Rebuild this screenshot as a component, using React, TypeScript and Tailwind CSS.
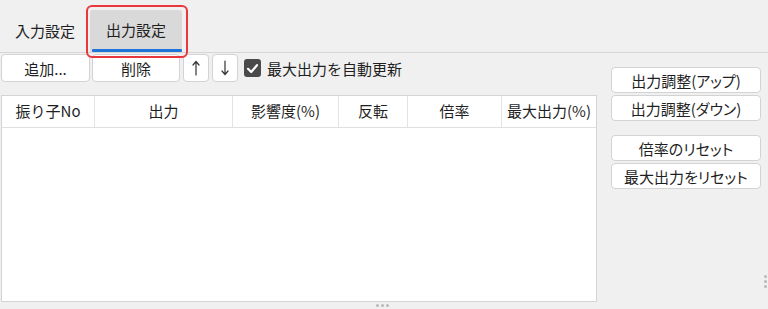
import React from "react";

const font = { fontFamily: '"Noto Sans CJK JP", "Noto Sans", sans-serif' };

function Btn({ children, className = "" }: { children: React.ReactNode; className?: string }) {
  return (
    <div
      className={`flex items-center justify-center bg-white border border-[#d3d3d3] rounded-[4px] text-[15px] text-[#1f1f1f] leading-none ${className}`}
    >
      {children}
    </div>
  );
}

const cols = [
  { label: "振り子No", w: "w-[93px]" },
  { label: "出力", w: "w-[138px]" },
  { label: "影響度(%)", w: "w-[106px]" },
  { label: "反転", w: "w-[69px]" },
  { label: "倍率", w: "w-[94px]" },
  { label: "最大出力(%)", w: "flex-1" },
];

function Dot() {
  return <div className="w-[3px] h-[3px] rounded-full bg-[#b8b8b8]" />;
}

function Arrow({ down = false }: { down?: boolean }) {
  return (
    <svg width="10" height="16" viewBox="0 0 10 16" className={down ? "rotate-180" : ""}>
      <path d="M5 1.5 V15 M2 5 L5 1.5 L8 5" fill="none" stroke="#333333" strokeWidth="1.2" strokeLinecap="round" strokeLinejoin="round" />
    </svg>
  );
}

export default function App() {
  return (
    <div className="w-[768px] h-[309px] bg-[#f0f0f0] overflow-hidden flex flex-col relative" style={font}>
      {/* Tab bar */}
      <div className="h-[53px] flex items-end border-b border-[#d6d6d6] shrink-0">
        <div className="h-[42px] w-[86px] flex items-center justify-center text-[15px] text-[#1f1f1f] pl-[4px]">
          入力設定
        </div>
        <div className="h-[42px] w-[92px] ml-[4px] flex flex-col bg-[#d9d9d9] rounded-t-[3px]">
          <div className="flex-1 flex items-center justify-center text-[15px] text-[#1f1f1f] pt-[1px]">出力設定</div>
          <div className="h-[3px] ml-[2px] bg-[#1e74d8] rounded-[1px]" />
        </div>
      </div>
      {/* red highlight annotation */}
      <div className="absolute left-[86px] top-[5px] w-[102px] h-[53px] border-2 border-[#e8383d] rounded-[6px] pointer-events-none" />

      {/* Content */}
      <div className="flex flex-1 min-h-0">
        {/* Left panel */}
        <div className="w-[597px] flex flex-col pl-[1px]">
          <div className="flex items-center h-[28px] mt-[1px] gap-[2px]">
            <Btn className="w-[89px] h-[28px]">追加...</Btn>
            <Btn className="w-[88px] h-[28px]">削除</Btn>
            <Btn className="w-[26px] h-[28px] ml-[1px]">
              <Arrow />
            </Btn>
            <Btn className="w-[26px] h-[28px] ml-[1px]">
              <Arrow down />
            </Btn>
            <div className="ml-[4px] w-[17px] h-[18px] rounded-[3px] bg-[#4a4a4a] flex items-center justify-center">
              <svg width="13" height="13" viewBox="0 0 13 13">
                <path d="M2 6.8 L5.2 10 L11 3.2" fill="none" stroke="#ffffff" strokeWidth="2.2" strokeLinecap="round" strokeLinejoin="round" />
              </svg>
            </div>
            <span className="ml-[4px] text-[15px] text-[#1f1f1f] leading-none">最大出力を自動更新</span>
          </div>
          <div className="mt-[13px] flex-1 bg-white border border-[#d4d4d4] flex flex-col">
            <div className="h-[32px] flex border-b border-[#e0e0e0]">
              {cols.map((c, i) => (
                <div
                  key={c.label}
                  className={`${c.w} flex items-center justify-center text-[15px] text-[#1f1f1f] ${i < cols.length - 1 ? "border-r border-[#e3e3e3]" : ""}`}
                >
                  {c.label}
                </div>
              ))}
            </div>
          </div>
        </div>

        {/* Right panel */}
        <div className="flex-1 flex">
          <div className="ml-[14px] w-[150px] flex flex-col pt-[14px] [font-feature-settings:'palt']">
            <Btn className="h-[26px]">出力調整(アップ)</Btn>
            <Btn className="h-[26px] mt-[2px]">出力調整(ダウン)</Btn>
            <Btn className="h-[26px] mt-[14px]">倍率のリセット</Btn>
            <Btn className="h-[26px] mt-[2px]">最大出力をリセット</Btn>
          </div>
          <div className="flex-1 flex flex-col justify-end items-end pb-[14px] pr-[1px] gap-[2px]">
            <Dot />
            <Dot />
            <Dot />
          </div>
        </div>
      </div>
      {/* bottom splitter grip */}
      <div className="h-[7px] shrink-0 flex justify-center items-start pt-[2px] gap-[2px] pr-[4px]">
        <Dot />
        <Dot />
        <Dot />
      </div>
    </div>
  );
}
